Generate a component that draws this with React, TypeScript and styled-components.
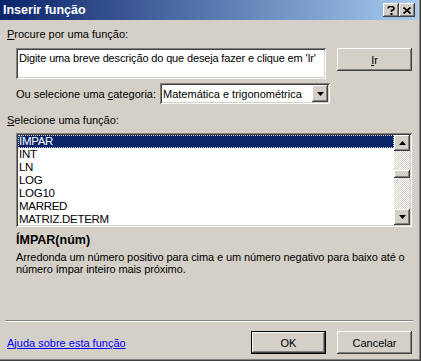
import React from 'react'
import styled, { createGlobalStyle } from 'styled-components'

const GlobalStyle = createGlobalStyle`
  html, body { margin: 0; padding: 0; background: #d4d0c8; }
  body { font-family: Tahoma, "Liberation Sans", Arial, sans-serif; font-size: 11px; color: #000; }
`

const face = '#d4d0c8'
const sunken = `inset 1px 1px #808080, inset -1px -1px #ffffff, inset 2px 2px #404040, inset -2px -2px ${face}`
const raised = `inset -1px -1px #404040, inset 1px 1px #ffffff, inset -2px -2px #808080, inset 2px 2px ${face}`

const Window = styled.div`
  width: 421px;
  height: 361px;
  box-sizing: border-box;
  background: ${face};
  box-shadow: inset -1px -1px #404040, inset -2px -2px #808080;
  padding-right: 3px;
  padding-bottom: 3px;
  display: flex;
  flex-direction: column;
`

const TitleBar = styled.div`
  height: 20px;
  display: flex;
  align-items: center;
  padding: 0 3px 0 3px;
  background: linear-gradient(to right, #0a246a, #a6caf0);
  color: #fff;
  font-weight: bold;
  font-size: 12.5px;
`

const TitleText = styled.span`
  flex: 1;
`

const CaptionButton = styled.div`
  width: 16px;
  height: 14px;
  background: ${face};
  box-shadow: ${raised};
  display: flex;
  align-items: center;
  justify-content: center;
  color: #000;
`

const Body = styled.div`
  flex: 1;
  display: flex;
  flex-direction: column;
  padding: 8px 6px 0 7px;
`

const Label = styled.div<{ $top: number }>`
  margin-top: ${(p) => p.$top}px;
  line-height: 13px;
  white-space: nowrap;
`

const U = styled.span`
  text-decoration: underline;
`

const SearchRow = styled.div`
  margin-top: 7px;
  margin-left: 9px;
  display: flex;
  align-items: flex-start;
  gap: 11px;
`

const TextBox = styled.div`
  width: 310px;
  height: 31px;
  box-sizing: border-box;
  background: #fff;
  box-shadow: ${sunken};
  padding: 4px 3px;
  line-height: 13px;
  letter-spacing: -0.15px;
  white-space: nowrap;
  overflow: hidden;
`

const Button = styled.div<{ $default?: boolean }>`
  width: 75px;
  height: 23px;
  box-sizing: border-box;
  background: ${face};
  display: flex;
  align-items: center;
  justify-content: center;
  box-shadow: ${(p) =>
    p.$default
      ? `inset 0 0 0 1px #000, inset -2px -2px #404040, inset 2px 2px #ffffff, inset -3px -3px #808080`
      : raised};
`

const CategoryRow = styled.div`
  margin-top: 4px;
  margin-left: 9px;
  display: flex;
  align-items: center;
  gap: 4px;
`

const Select = styled.div`
  width: 170px;
  height: 21px;
  box-sizing: border-box;
  background: #fff;
  box-shadow: ${sunken};
  padding: 2px;
  display: flex;
  align-items: center;
`

const SelectText = styled.span`
  flex: 1;
  padding-left: 1px;
`

const ArrowButton = styled.div<{ $h?: number }>`
  width: 16px;
  height: ${(p) => p.$h ?? 16}px;
  flex: none;
  box-sizing: border-box;
  background: ${face};
  box-shadow: ${raised};
  display: flex;
  align-items: center;
  justify-content: center;
`

const ListBox = styled.div`
  margin-top: 6px;
  margin-left: 9px;
  width: 396px;
  height: 94px;
  box-sizing: border-box;
  background: #fff;
  box-shadow: ${sunken};
  padding: 2px;
  display: flex;
`

const Items = styled.div`
  flex: 1;
  overflow: hidden;
`

const Item = styled.div<{ $selected?: boolean }>`
  height: 13px;
  line-height: 13px;
  padding-left: 1px;
  box-sizing: border-box;
  font-size: 11.5px;
  letter-spacing: -0.3px;
  background: ${(p) => (p.$selected ? '#0a246a' : 'transparent')};
  color: ${(p) => (p.$selected ? '#fff' : '#000')};
  outline: ${(p) => (p.$selected ? '1px dotted #d4d0c8' : 'none')};
  outline-offset: -1px;
`

const ScrollBar = styled.div`
  width: 16px;
  display: flex;
  flex-direction: column;
  background-color: #fff;
  background-image: repeating-conic-gradient(${face} 0 25%, #ffffff 0 50%);
  background-size: 2px 2px;
`

const Track = styled.div`
  flex: 1;
`

const Thumb = styled.div`
  margin-top: 19px;
  height: 8px;
  background: ${face};
  box-shadow: ${raised};
`

const Signature = styled.div`
  margin-top: 6px;
  margin-left: 9px;
  font-weight: bold;
  font-size: 12.5px;
  line-height: 14px;
`

const Description = styled.div`
  margin-top: 4px;
  margin-left: 9px;
  width: 400px;
  line-height: 12px;
  letter-spacing: -0.1px;
`

const Separator = styled.div`
  margin-top: 45px;
  margin-left: -2px;
  width: 408px;
  height: 0;
  border-top: 1px solid #808080;
  border-bottom: 1px solid #ffffff;
`

const Footer = styled.div`
  margin-top: 9px;
  display: flex;
  align-items: center;
`

const HelpLink = styled.a`
  flex: 1;
  color: #0000ff;
  text-decoration: underline;
  cursor: pointer;
`

const ButtonGroup = styled.div`
  display: flex;
  gap: 11px;
`

const Triangle = ({ up }: { up?: boolean }) => (
  <svg width="7" height="4" viewBox="0 0 7 4">
    <path d={up ? 'M3.5 0 L7 4 L0 4 Z' : 'M0 0 L7 0 L3.5 4 Z'} fill="#000" />
  </svg>
)

const functions = ['ÍMPAR', 'INT', 'LN', 'LOG', 'LOG10', 'MARRED', 'MATRIZ.DETERM']

export default function App() {
  return (
    <>
      <GlobalStyle />
      <Window>
        <TitleBar>
          <TitleText>Inserir função</TitleText>
          <CaptionButton>
            <svg width="8" height="9" viewBox="0 0 8 9">
              <path d="M1 2.5 Q1 0.5 4 0.5 Q7 0.5 7 2.5 Q7 4 4.5 4.5 L4.5 6" stroke="#000" strokeWidth="1.6" fill="none" />
              <rect x="3.5" y="7" width="2" height="2" fill="#000" />
            </svg>
          </CaptionButton>
          <CaptionButton>
            <svg width="8" height="7" viewBox="0 0 8 7">
              <path d="M0.5 0.5 L7.5 6.5 M7.5 0.5 L0.5 6.5" stroke="#000" strokeWidth="1.8" />
            </svg>
          </CaptionButton>
        </TitleBar>
        <Body>
          <Label $top={0}>
            <U>P</U>rocure por uma função:
          </Label>
          <SearchRow>
            <TextBox>Digite uma breve descrição do que deseja fazer e clique em 'Ir'</TextBox>
            <Button>
              <span>
                <U>I</U>r
              </span>
            </Button>
          </SearchRow>
          <CategoryRow>
            <span>
              Ou selecione uma <U>c</U>ategoria:
            </span>
            <Select>
              <SelectText>Matemática e trigonométrica</SelectText>
              <ArrowButton $h={17}>
                <Triangle />
              </ArrowButton>
            </Select>
          </CategoryRow>
          <Label $top={10}>
            <U>S</U>elecione uma função:
          </Label>
          <ListBox>
            <Items>
              {functions.map((f, i) => (
                <Item key={f} $selected={i === 0}>
                  {f}
                </Item>
              ))}
            </Items>
            <ScrollBar>
              <ArrowButton>
                <Triangle up />
              </ArrowButton>
              <Track>
                <Thumb />
              </Track>
              <ArrowButton>
                <Triangle />
              </ArrowButton>
            </ScrollBar>
          </ListBox>
          <Signature>ÍMPAR(núm)</Signature>
          <Description>
            Arredonda um número positivo para cima e um número negativo para baixo até o número ímpar inteiro mais
            próximo.
          </Description>
          <Separator />
          <Footer>
            <HelpLink>Ajuda sobre esta função</HelpLink>
            <ButtonGroup>
              <Button $default>OK</Button>
              <Button>Cancelar</Button>
            </ButtonGroup>
          </Footer>
        </Body>
      </Window>
    </>
  )
}
